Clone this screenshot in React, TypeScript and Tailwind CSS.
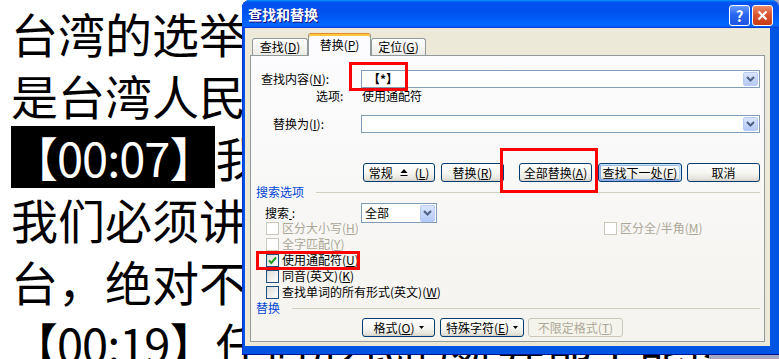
import React from 'react';

const Key = ({ k }: { k: string }) => (
  <span>
    (<span className="underline underline-offset-1">{k}</span>)
  </span>
);

const ComboArrow = ({ tall = false }: { tall?: boolean }) => (
  <div
    className={`w-[15px] ${tall ? 'h-[17px]' : 'h-[14px]'} rounded-[2px] border border-[#b9cbf3] bg-[linear-gradient(180deg,#dae5fe,#b4c9f7)] flex items-center justify-center`}
  >
    <svg width="9" height="6" viewBox="0 0 9 6">
      <path d="M1 1L4.5 4.5L8 1" fill="none" stroke="#4d6185" strokeWidth="2" />
    </svg>
  </div>
);

const Combo = ({ text = '' }: { text?: string }) => (
  <div className="w-[399px] h-[18px] border border-[#7f9db9] bg-white flex items-center justify-between pl-[6px] pr-[1px]">
    <span className="font-bold">{text}</span>
    <ComboArrow />
  </div>
);

const XpButton = ({
  children,
  className = '',
  focused = false,
  disabled = false,
}: {
  children: React.ReactNode;
  className?: string;
  focused?: boolean;
  disabled?: boolean;
}) => (
  <div
    className={`h-[19px] flex items-center justify-center rounded-[3px] border ${
      disabled
        ? 'border-[#cac8bb] text-[#aca899] bg-[#f5f4ea]'
        : 'border-[#003c74] bg-[linear-gradient(180deg,#ffffff_0%,#f5f5f1_55%,#e6e5de_85%,#d6d0c5_100%)]'
    } ${
      focused
        ? 'shadow-[inset_-1px_1px_#cee7ff,inset_1px_2px_#98b8ea,inset_-2px_2px_#bcd4f6,inset_1px_-1px_#89ade4,inset_2px_-2px_#89ade4]'
        : ''
    } ${className}`}
  >
    {children}
  </div>
);

const CheckBox = ({ checked = false, disabled = false }: { checked?: boolean; disabled?: boolean }) => (
  <div
    className={`w-[13px] h-[13px] shrink-0 border flex items-center justify-center ${
      disabled ? 'border-[#cac8bb] bg-white' : 'border-[#1c5180] bg-[linear-gradient(135deg,#dcdcd7,#ffffff)]'
    }`}
  >
    {checked && (
      <svg width="9" height="9" viewBox="0 0 9 9">
        <path d="M1 4.5L3.3 7L8 1.5" fill="none" stroke="#21a121" strokeWidth="2" />
      </svg>
    )}
  </div>
);

const CheckRow = ({
  label,
  k,
  checked = false,
  disabled = false,
}: {
  label: string;
  k: string;
  checked?: boolean;
  disabled?: boolean;
}) => (
  <div className={`flex items-center ${disabled ? 'text-[#aca899]' : 'text-black'}`}>
    <CheckBox checked={checked} disabled={disabled} />
    <span className="ml-[3px]">
      {label}
      <Key k={k} />
    </span>
  </div>
);

const DropTri = () => (
  <svg width="5" height="3" viewBox="0 0 5 3" className="ml-[4px]">
    <path d="M0 0H5L2.5 3Z" fill="#000" />
  </svg>
);

export default function App() {
  return (
    <div className="relative w-[779px] h-[359px] overflow-hidden bg-[#a3a7c4] font-['Noto_Sans_CJK_SC','Noto_Sans',sans-serif]">
      {/* document behind the dialog */}
      <div className="w-[709px] h-full bg-white overflow-hidden pl-[11px] pt-[2px] text-[47px] leading-[62px] text-black whitespace-nowrap">
        <div>台湾的选举结果必须得到尊重，这</div>
        <div>是台湾人民自己的选择</div>
        <div>
          <span className="inline-block h-[62px] bg-black text-white tracking-[-1px]">【00:07】</span>我们认为
        </div>
        <div>我们必须讲清楚这一点</div>
        <div>台，绝对不能接受</div>
        <div>
          <span className="tracking-[-1px]">【00:19】</span>任何形式的舞弊都不能接受
        </div>
      </div>

      {/* find and replace dialog */}
      <div className="absolute left-[242px] top-0 w-[537px] h-[355px] flex flex-col rounded-t-[8px] overflow-hidden bg-[#0054e3] shadow-[inset_1px_0_#0831d9,inset_0_-1px_#00138c] text-[12px] leading-[14px] text-black">
        <div className="h-[28px] shrink-0 flex items-center pl-[6px] pr-[6px] bg-[linear-gradient(180deg,#0997ff,#0053ee_8%,#0050ee_40%,#0066ff_88%,#0066ff_93%,#005bff_95%,#003dd7_96%,#003dd7)]">
          <span className="text-white font-bold text-[14px] [text-shadow:1px_1px_#0f1089]">查找和替换</span>
          <div className="ml-auto flex gap-[2px] self-start mt-[5px]">
            <div className="w-[21px] h-[21px] rounded-[3px] border border-white bg-[linear-gradient(180deg,#6a9bfb_0%,#2a66f0_45%,#1d55e2_100%)] flex items-center justify-center text-white font-bold text-[15px] leading-none">
              ?
            </div>
            <div className="w-[21px] h-[21px] rounded-[3px] border border-white bg-[linear-gradient(180deg,#ec8d6c_0%,#dc5632_45%,#c63b15_100%)] flex items-center justify-center">
              <svg width="11" height="11" viewBox="0 0 11 11">
                <path d="M1.5 1.5L9.5 9.5M9.5 1.5L1.5 9.5" stroke="#fff" strokeWidth="2.2" />
              </svg>
            </div>
          </div>
        </div>

        <div className="flex-1 ml-[3px] mr-[9px] mb-[9px] bg-[#ece9d8] flex flex-col pt-[5px] px-[5px] pb-[4px]">
          {/* tabs */}
          <div className="relative z-10 h-[22px] shrink-0 flex items-end pl-[2px]">
            <div className="w-[56px] h-[17px] border border-b-0 border-[#919b9c] rounded-t-[3px] bg-[linear-gradient(180deg,#ffffff,#ecebe6)] flex items-center justify-center">
              查找<Key k="D" />
            </div>
            <div className="w-[63px] h-[23px] -mb-px border-x border-t border-x-[#919b9c] border-t-[#e68b2c] rounded-t-[3px] bg-[#fcfcfe] shadow-[inset_0_2px_#ffc83c] flex items-center justify-center">
              替换<Key k="P" />
            </div>
            <div className="w-[55px] h-[17px] border border-b-0 border-[#919b9c] rounded-t-[3px] bg-[linear-gradient(180deg,#ffffff,#ecebe6)] flex items-center justify-center">
              定位<Key k="G" />
            </div>
          </div>

          {/* tab page */}
          <div className="flex-1 border border-[#919b9c] bg-[linear-gradient(180deg,#fcfcfe,#f4f3ee)] flex flex-col">
            <div className="mt-[14px] h-[18px] flex items-center">
              <div className="w-[110px] pl-[10px]">
                查找内容<Key k="N" />:
              </div>
              <Combo text="【*】" />
            </div>

            <div className="mt-[1px] h-[14px] flex items-center">
              <div className="w-[111px] pl-[65px]">选项:</div>
              <span>使用通配符</span>
            </div>

            <div className="mt-[12px] h-[18px] flex items-center">
              <div className="w-[110px] pl-[22px]">
                替换为<Key k="I" />:
              </div>
              <Combo />
            </div>

            <div className="mt-[30px] h-[19px] flex pl-[112px]">
              <XpButton className="w-[72px] gap-[7px]">
                <span>常规</span>
                <svg width="8" height="8" viewBox="0 0 8 8">
                  <path d="M4 0L7.5 4H0.5Z" fill="#000" />
                  <path d="M0.5 6.5H7.5" stroke="#000" strokeWidth="1" />
                </svg>
                <Key k="L" />
              </XpButton>
              <XpButton className="w-[63px] ml-[6px]">
                替换<Key k="R" />
              </XpButton>
              <XpButton className="w-[73px] ml-[15px]">
                全部替换<Key k="A" />
              </XpButton>
              <XpButton className="w-[84px] ml-[6px]" focused>
                查找下一处<Key k="F" />
              </XpButton>
              <XpButton className="w-[73px] ml-[5px]">取消</XpButton>
            </div>

            <div className="mt-[3px] h-[14px] flex items-center pl-[5px] pr-[4px]">
              <span className="text-[#0046d5]">搜索选项</span>
              <div className="flex-1 ml-[12px] h-px bg-[#d0d0bf]" />
            </div>

            <div className="mt-[4px] h-[20px] flex items-center">
              <div className="w-[110px] pl-[14px]">
                搜索<span className="underline">&nbsp;</span>:
              </div>
              <div className="w-[76px] h-[20px] border border-[#7f9db9] bg-white flex items-center justify-between pl-[3px] pr-[1px]">
                <span>全部</span>
                <ComboArrow tall />
              </div>
            </div>

            <div className="-mt-[3px] flex flex-col pl-[15px]">
              <div className="h-[16px] flex items-center">
                <div className="w-[338px]">
                  <CheckRow label="区分大小写" k="H" disabled />
                </div>
                <CheckRow label="区分全/半角" k="M" disabled />
              </div>
              <div className="h-[16px] flex items-center">
                <CheckRow label="全字匹配" k="Y" disabled />
              </div>
              <div className="h-[16px] flex items-center">
                <CheckRow label="使用通配符" k="U" checked />
              </div>
              <div className="h-[16px] flex items-center">
                <CheckRow label="同音(英文)" k="K" />
              </div>
              <div className="h-[16px] flex items-center">
                <CheckRow label="查找单词的所有形式(英文)" k="W" />
              </div>
            </div>

            <div className="mt-[1px] h-[14px] flex items-center pl-[5px] pr-[4px]">
              <span className="text-[#0046d5]">替换</span>
              <div className="flex-1 ml-[12px] h-px bg-[#d0d0bf]" />
            </div>

            <div className="mt-[3px] h-[19px] flex pl-[111px]">
              <XpButton className="w-[73px]">
                格式<Key k="O" />
                <DropTri />
              </XpButton>
              <XpButton className="w-[84px] ml-[5px]">
                特殊字符<Key k="E" />
                <DropTri />
              </XpButton>
              <XpButton className="w-[95px] ml-[4px]" disabled>
                不限定格式<Key k="T" />
              </XpButton>
            </div>
          </div>
        </div>
      </div>

      {/* red annotation boxes */}
      <div className="absolute left-[349px] top-[62px] w-[59px] h-[29px] border-[3px] border-[#ff0000]" />
      <div className="absolute left-[500px] top-[148px] w-[98px] h-[45px] border-[3px] border-[#ff0000]" />
      <div className="absolute left-[256px] top-[251px] w-[104px] h-[19px] border-[3px] border-[#ff0000]" />
    </div>
  );
}
